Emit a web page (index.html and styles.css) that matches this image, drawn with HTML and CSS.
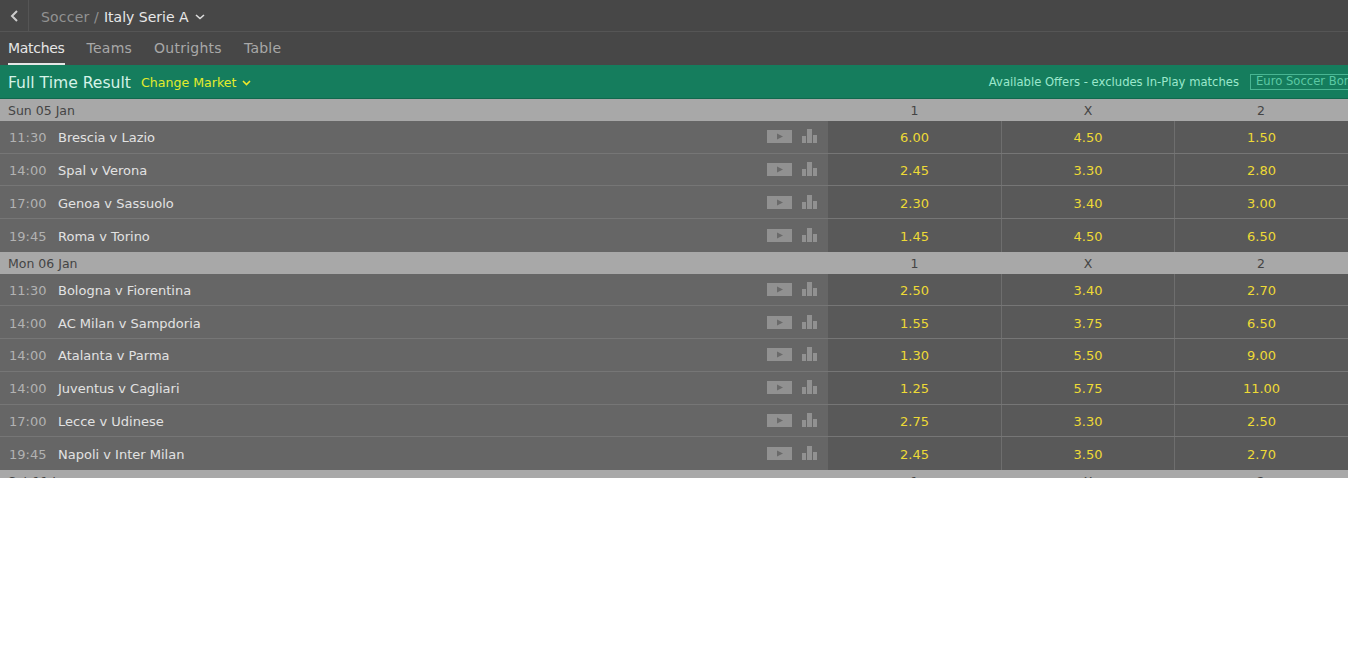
FILE: index.html
```html
<!DOCTYPE html>
<html lang="en">

  <head>
    <meta charset="UTF-8">
    <title>Italy Serie A</title>
    <link rel="stylesheet" href="styles.css">
  </head>

  <body>
    <div class="coupon">
      <div class="crumbs">
        <div class="back">
          <svg width="9" height="12" viewBox="0 0 9 12"><path d="M7 1 L2 6 L7 11" fill="none" stroke="#ccc" stroke-width="2"/></svg>
        </div>
        <span class="crumb-sport">Soccer /</span>
        <span class="crumb-league">Italy Serie A</span>
        <svg class="crumb-arrow" width="10" height="6" viewBox="0 0 10 6"><path d="M1 1 L5 4.500 L9 1" fill="none" stroke="#ddd" stroke-width="1.600"/></svg>
      </div>

      <div class="tabs">
        <a class="tab active">Matches</a>
        <a class="tab">Teams</a>
        <a class="tab">Outrights</a>
        <a class="tab">Table</a>
      </div>

      <div class="market">
        <span class="market-name">Full Time Result</span>
        <span class="market-change">Change Market</span>
        <svg class="market-arrow" width="9" height="6" viewBox="0 0 9 6"><path d="M1 1 L4.500 4.500 L8 1" fill="none" stroke="#f0e82a" stroke-width="1.600"/></svg>
        <span class="offers">Available Offers - excludes In-Play matches</span>
        <span class="offer-box">Euro Soccer Bonus</span>
      </div>

      <div class="day"><span class="day-name">Sun 05 Jan</span><span>1</span><span>X</span><span>2</span></div>

      <div class="row">
        <div class="fixture"><span class="time">11:30</span><span class="teams">Brescia v Lazio</span>
          <svg class="icons" width="50" height="15" viewBox="0 0 50 15"><rect y="2" width="25" height="13" fill="#919191"/><path d="M10 5.500 L16 8.500 L10 11.500 Z" fill="#6a6a6a"/><path d="M35 8h4v7h-4z M40 1h5v14h-5z M46 7h4v8h-4z" fill="#919191"/></svg>
        </div>
        <div class="odds">6.00</div><div class="odds">4.50</div><div class="odds">1.50</div>
      </div>
      <div class="row">
        <div class="fixture"><span class="time">14:00</span><span class="teams">Spal v Verona</span>
          <svg class="icons" width="50" height="15" viewBox="0 0 50 15"><rect y="2" width="25" height="13" fill="#919191"/><path d="M10 5.500 L16 8.500 L10 11.500 Z" fill="#6a6a6a"/><path d="M35 8h4v7h-4z M40 1h5v14h-5z M46 7h4v8h-4z" fill="#919191"/></svg>
        </div>
        <div class="odds">2.45</div><div class="odds">3.30</div><div class="odds">2.80</div>
      </div>
      <div class="row">
        <div class="fixture"><span class="time">17:00</span><span class="teams">Genoa v Sassuolo</span>
          <svg class="icons" width="50" height="15" viewBox="0 0 50 15"><rect y="2" width="25" height="13" fill="#919191"/><path d="M10 5.500 L16 8.500 L10 11.500 Z" fill="#6a6a6a"/><path d="M35 8h4v7h-4z M40 1h5v14h-5z M46 7h4v8h-4z" fill="#919191"/></svg>
        </div>
        <div class="odds">2.30</div><div class="odds">3.40</div><div class="odds">3.00</div>
      </div>
      <div class="row last">
        <div class="fixture"><span class="time">19:45</span><span class="teams">Roma v Torino</span>
          <svg class="icons" width="50" height="15" viewBox="0 0 50 15"><rect y="2" width="25" height="13" fill="#919191"/><path d="M10 5.500 L16 8.500 L10 11.500 Z" fill="#6a6a6a"/><path d="M35 8h4v7h-4z M40 1h5v14h-5z M46 7h4v8h-4z" fill="#919191"/></svg>
        </div>
        <div class="odds">1.45</div><div class="odds">4.50</div><div class="odds">6.50</div>
      </div>

      <div class="day"><span class="day-name">Mon 06 Jan</span><span>1</span><span>X</span><span>2</span></div>

      <div class="row">
        <div class="fixture"><span class="time">11:30</span><span class="teams">Bologna v Fiorentina</span>
          <svg class="icons" width="50" height="15" viewBox="0 0 50 15"><rect y="2" width="25" height="13" fill="#919191"/><path d="M10 5.500 L16 8.500 L10 11.500 Z" fill="#6a6a6a"/><path d="M35 8h4v7h-4z M40 1h5v14h-5z M46 7h4v8h-4z" fill="#919191"/></svg>
        </div>
        <div class="odds">2.50</div><div class="odds">3.40</div><div class="odds">2.70</div>
      </div>
      <div class="row">
        <div class="fixture"><span class="time">14:00</span><span class="teams">AC Milan v Sampdoria</span>
          <svg class="icons" width="50" height="15" viewBox="0 0 50 15"><rect y="2" width="25" height="13" fill="#919191"/><path d="M10 5.500 L16 8.500 L10 11.500 Z" fill="#6a6a6a"/><path d="M35 8h4v7h-4z M40 1h5v14h-5z M46 7h4v8h-4z" fill="#919191"/></svg>
        </div>
        <div class="odds">1.55</div><div class="odds">3.75</div><div class="odds">6.50</div>
      </div>
      <div class="row">
        <div class="fixture"><span class="time">14:00</span><span class="teams">Atalanta v Parma</span>
          <svg class="icons" width="50" height="15" viewBox="0 0 50 15"><rect y="2" width="25" height="13" fill="#919191"/><path d="M10 5.500 L16 8.500 L10 11.500 Z" fill="#6a6a6a"/><path d="M35 8h4v7h-4z M40 1h5v14h-5z M46 7h4v8h-4z" fill="#919191"/></svg>
        </div>
        <div class="odds">1.30</div><div class="odds">5.50</div><div class="odds">9.00</div>
      </div>
      <div class="row">
        <div class="fixture"><span class="time">14:00</span><span class="teams">Juventus v Cagliari</span>
          <svg class="icons" width="50" height="15" viewBox="0 0 50 15"><rect y="2" width="25" height="13" fill="#919191"/><path d="M10 5.500 L16 8.500 L10 11.500 Z" fill="#6a6a6a"/><path d="M35 8h4v7h-4z M40 1h5v14h-5z M46 7h4v8h-4z" fill="#919191"/></svg>
        </div>
        <div class="odds">1.25</div><div class="odds">5.75</div><div class="odds">11.00</div>
      </div>
      <div class="row">
        <div class="fixture"><span class="time">17:00</span><span class="teams">Lecce v Udinese</span>
          <svg class="icons" width="50" height="15" viewBox="0 0 50 15"><rect y="2" width="25" height="13" fill="#919191"/><path d="M10 5.500 L16 8.500 L10 11.500 Z" fill="#6a6a6a"/><path d="M35 8h4v7h-4z M40 1h5v14h-5z M46 7h4v8h-4z" fill="#919191"/></svg>
        </div>
        <div class="odds">2.75</div><div class="odds">3.30</div><div class="odds">2.50</div>
      </div>
      <div class="row last">
        <div class="fixture"><span class="time">19:45</span><span class="teams">Napoli v Inter Milan</span>
          <svg class="icons" width="50" height="15" viewBox="0 0 50 15"><rect y="2" width="25" height="13" fill="#919191"/><path d="M10 5.500 L16 8.500 L10 11.500 Z" fill="#6a6a6a"/><path d="M35 8h4v7h-4z M40 1h5v14h-5z M46 7h4v8h-4z" fill="#919191"/></svg>
        </div>
        <div class="odds">2.45</div><div class="odds">3.50</div><div class="odds">2.70</div>
      </div>

      <div class="day"><span class="day-name">Sat 11 Jan</span><span>1</span><span>X</span><span>2</span></div>
    </div>
  </body>

</html>
```
FILE: styles.css
```css
html {
  font-family: "DejaVu Sans", Verdana, sans-serif;
}

body {
  margin: 0;
  background: #fff;
}

.coupon {
  height: 478px;
  overflow: hidden;
  background: #474747;
}

/* top breadcrumb */
.crumbs {
  display: flex;
  align-items: center;
  height: 31px;
  border-bottom: 1px solid #555;
  font-size: 14px;
}

.crumb-sport,
.crumb-league {
  padding-top: 2px;
}

.back {
  display: flex;
  align-items: center;
  justify-content: center;
  width: 28px;
  height: 31px;
  border-right: 1px solid #555;
  margin-right: 12px;
}

.crumb-sport {
  color: #929292;
  letter-spacing: 0.2px;
  margin-right: 5px;
}

.crumb-league {
  color: #e8e8e8;
}

.crumb-arrow {
  margin-left: 6px;
  margin-top: 2px;
}

/* tabs */
.tabs {
  display: flex;
  gap: 22px;
  height: 33px;
  padding-left: 8px;
}

.tab {
  font-size: 14px;
  line-height: 32px;
  height: 31px;
  color: #a8a8a8;
  letter-spacing: 0.25px;
}

.tab.active {
  color: #e6e6e6;
  letter-spacing: -0.3px;
  border-bottom: 2px solid #e6e6e6;
}

/* market bar */
.market {
  display: flex;
  align-items: center;
  height: 34px;
  padding-left: 8px;
  background: #157d5d;
  border-bottom: 1px solid #11684d;
  box-sizing: border-box;
  white-space: nowrap;
  overflow: hidden;
}

.market-name {
  font-size: 15.600px;
  color: #d6f3e8;
  margin-right: 10px;
  padding-top: 2px;
}

.market-change {
  font-size: 12.600px;
  color: #e3ec2c;
  padding-top: 2px;
}

.market-arrow {
  margin-left: 6px;
  margin-top: 2px;
}

.offers {
  margin-left: auto;
  font-size: 11.600px;
  color: #9be8cc;
}

.offer-box {
  flex: none;
  width: 99px;
  height: 16px;
  margin-left: 11px;
  padding-left: 5px;
  margin-right: -1px;
  overflow: hidden;
  font-size: 11.600px;
  line-height: 13px;
  color: #5cc9a4;
  border: 1px solid #48b592;
  box-sizing: border-box;
}

/* day header and rows share the same columns */
.day,
.row {
  display: grid;
  grid-template-columns: 828px 174px 173px 173px;
}

.day {
  height: 21.750px;
  background: #a8a8a8;
  color: #444;
  font-size: 12.500px;
  line-height: 24px;
  text-align: center;
}

.day span {
  padding-right: 1px;
}

.day .day-name {
  text-align: left;
  padding-left: 8px;
  padding-right: 0;
}

.row {
  height: 32.750px;
  box-sizing: border-box;
  border-bottom: 1px solid #767676;
  font-size: 13px;
}

.row.last {
  border-bottom: none;
}

.fixture {
  display: flex;
  align-items: center;
  padding-left: 9px;
  padding-right: 11px;
  background: #666;
}

.time {
  width: 49px;
  padding-top: 2px;
  color: #b2b2b2;
}

.teams {
  padding-top: 2px;
  color: #e2e2e2;
}

.icons {
  margin-left: auto;
  margin-top: -2px;
}

.odds {
  display: flex;
  align-items: center;
  justify-content: center;
  padding-top: 2px;
  background: #595959;
  color: #eeda36;
  border-right: 1px solid #6e6e6e;
}

.odds:last-child {
  border-right: none;
}
```
